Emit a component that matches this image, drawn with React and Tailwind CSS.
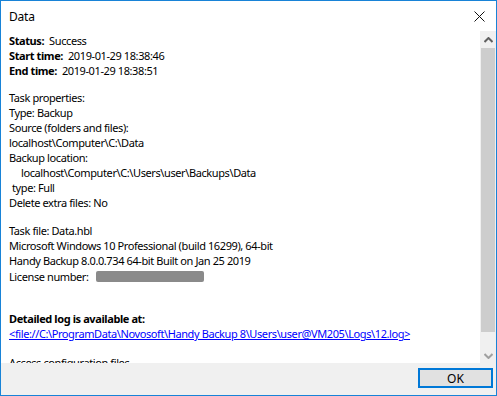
export default function App() {
  const font = { fontFamily: '"Noto Sans", "Open Sans", sans-serif' };

  return (
    <div
      className="w-[497px] h-[396px] border border-[#1883d7] bg-white flex flex-col text-[11px] tracking-[-0.4px] text-black"
      style={font}
    >
      {/* Title bar */}
      <div className="h-[30px] flex items-center justify-between pl-[8px] pr-[10px]">
        <span className="leading-[15px] text-[12px] tracking-[-0.2px]">Data</span>
        <svg width="11" height="11" viewBox="0 0 11 11" className="mr-[1px]">
          <path d="M0.5 0.5 L10.5 10.5 M10.5 0.5 L0.5 10.5" stroke="#111" strokeWidth="1" />
        </svg>
      </div>

      {/* Body */}
      <div className="h-[332px] flex">
        <div className="flex-1 overflow-hidden pl-[8px] pt-[2px] leading-[15px]">
          <p><b>Status:</b>&nbsp; Success</p>
          <p><b>Start time:</b>&nbsp; 2019-01-29 18:38:46</p>
          <p><b>End time:</b>&nbsp; 2019-01-29 18:38:51</p>

          <div className="mt-[12px]">
            <p>Task properties:</p>
            <p>Type: Backup</p>
            <p>Source (folders and files):</p>
            <p>localhost\Computer\C:\Data</p>
            <p>Backup location:</p>
            <p className="pl-[12px]">localhost\Computer\C:\Users\user\Backups\Data</p>
            <p className="pl-[3px]">type: Full</p>
            <p>Delete extra files: No</p>
          </div>

          <div className="mt-[13px]">
            <p>Task file: Data.hbl</p>
            <p>Microsoft Windows 10 Professional (build 16299), 64-bit</p>
            <p>Handy Backup 8.0.0.734 64-bit Built on Jan 25 2019</p>
            <p className="flex items-center h-[17px]">
              License number:
              <span className="ml-[7px] inline-block w-[108px] h-[11px] rounded-[2px] bg-[#8a8a8a]" />
            </p>
          </div>

          <div className="mt-[26px]">
            <p className="font-bold">Detailed log is available at:</p>
            <p>
              <a className="text-[#0000ff] underline">
                &lt;file://C:\ProgramData\Novosoft\Handy Backup 8\Users\user@VM205\Logs\12.log&gt;
              </a>
            </p>
          </div>

          <p className="mt-[14px]">Access configuration files</p>
        </div>

        {/* Scrollbar */}
        <div className="w-[16px] bg-[#f0f0f0] flex flex-col">
          <div className="h-[17px] flex items-center justify-center">
            <svg width="9" height="6" viewBox="0 0 9 6">
              <path d="M0.5 5 L4.5 1 L8.5 5" stroke="#606060" strokeWidth="2" fill="none" />
            </svg>
          </div>
          <div className="h-[284px] mx-[1px] bg-[#cdcdcd]" />
          <div className="flex-1 flex items-end justify-center pb-[4px]">
            <svg width="9" height="6" viewBox="0 0 9 6">
              <path d="M0.5 1 L4.5 5 L8.5 1" stroke="#a0a0a0" strokeWidth="2" fill="none" />
            </svg>
          </div>
        </div>
      </div>

      {/* Footer */}
      <div className="flex-1 bg-[#f0f0f0] flex items-start justify-end pt-[5px] pr-[3px]">
        <button className="w-[75px] h-[20px] border-2 border-[#0078d7] bg-[#e1e1e1] text-[12px] leading-[15px] tracking-normal flex items-center justify-center">
          OK
        </button>
      </div>
    </div>
  );
}
